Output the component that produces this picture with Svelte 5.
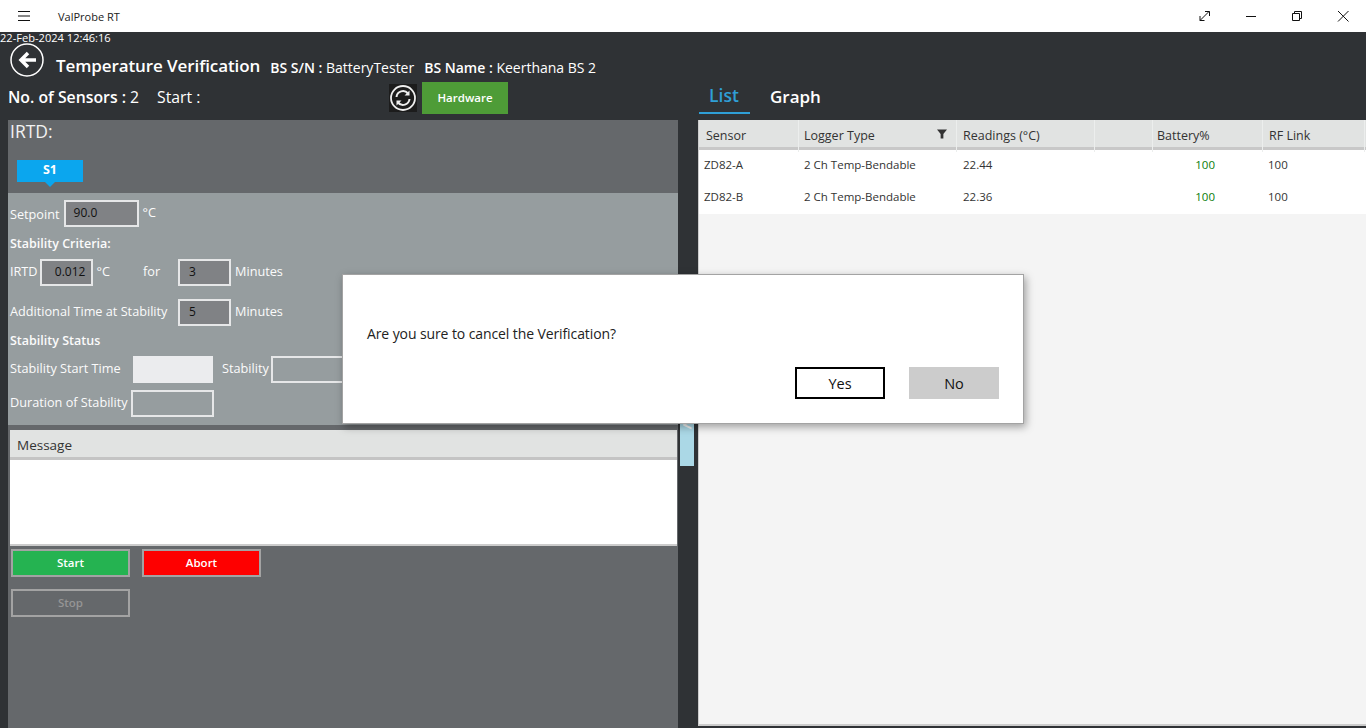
<script>
  const sensors = [
    { name: 'ZD82-A', type: '2 Ch Temp-Bendable', reading: '22.44', battery: '100', rf: '100' },
    { name: 'ZD82-B', type: '2 Ch Temp-Bendable', reading: '22.36', battery: '100', rf: '100' }
  ];
</script>

<div class="window">
  <header class="titlebar">
    <svg class="menu" width="14" height="12" viewBox="0 0 14 12"><path d="M1 1.5h12M1 6h12M1 10.5h12" stroke="#111" stroke-width="1" fill="none"/></svg>
    <span class="app-name">ValProbe RT</span>
    <div class="controls">
      <svg width="46" height="32" viewBox="0 0 46 32"><path d="M18 20.500l9-9M23 11.500h4.500v4.500M18 16v4.500h4.500" stroke="#111" stroke-width="1" fill="none"/></svg>
      <svg width="46" height="32" viewBox="0 0 46 32"><path d="M18 16.500h10" stroke="#111" stroke-width="1" fill="none"/></svg>
      <svg width="46" height="32" viewBox="0 0 46 32"><path d="M18.500 13.500h7v7h-7zM20.500 13.500v-2h7v7h-2" stroke="#111" stroke-width="1" fill="none"/></svg>
      <svg width="46" height="32" viewBox="0 0 46 32"><path d="M18 11l10.500 10.500M28.500 11L18 21.500" stroke="#111" stroke-width="1" fill="none"/></svg>
    </div>
  </header>

  <div class="content">
    <div class="stamp">22-Feb-2024 12:46:16</div>
    <div class="title-row">
      <svg class="back" width="34" height="34" viewBox="0 0 34 34">
        <circle cx="17" cy="17" r="16" fill="none" stroke="#fff" stroke-width="1.500"/>
        <path d="M26 17H12M18 10l-7 7 7 7" fill="none" stroke="#fff" stroke-width="3.500"/>
      </svg>
      <h1>Temperature Verification</h1>
      <span class="meta"><b>BS S/N :</b> BatteryTester</span>
      <span class="meta"><b>BS Name :</b> Keerthana BS 2</span>
    </div>

    <div class="columns">
      <section class="left">
        <div class="sensor-row">
          <span class="count"><b>No. of Sensors :</b> 2</span>
          <span class="start">Start :</span>
          <span class="refresh">
            <svg width="28" height="28" viewBox="0 0 28 28">
              <circle cx="14" cy="14" r="12" fill="none" stroke="#eee" stroke-width="1.800"/>
              <path d="M7.500 13a6.500 6.500 0 0 1 11.500-3.500M20.500 15a6.500 6.500 0 0 1-11.500 3.500" fill="none" stroke="#eee" stroke-width="2"/>
              <path d="M20.500 6.500v5h-5zM7.500 21.500v-5h5z" fill="#eee"/>
            </svg>
          </span>
          <button class="hardware">Hardware</button>
        </div>

        <div class="panel">
          <div class="irtd">
            <div class="irtd-title">IRTD:</div>
            <div class="tab">S1</div>
          </div>
          <div class="form">
            <div class="row setpoint">
              <span>Setpoint</span>
              <span class="box w75">90.0</span>
              <span class="unit">°C</span>
            </div>
            <div class="heading criteria">Stability Criteria:</div>
            <div class="row irtd-row">
              <span class="txt">IRTD</span>
              <span class="box w53 small">0.012</span>
              <span class="unit txt">°C</span>
              <span class="for txt">for</span>
              <span class="box w53 num">3</span>
              <span class="txt">Minutes</span>
            </div>
            <div class="row additional">
              <span class="add-label txt">Additional Time at Stability</span>
              <span class="box w53 num">5</span>
              <span class="txt">Minutes</span>
            </div>
            <div class="heading status">Stability Status</div>
            <div class="row start-row">
              <span class="start-label txt">Stability Start Time</span>
              <span class="filled"></span>
              <span class="stab-label txt">Stability</span>
              <span class="box empty wide"></span>
            </div>
            <div class="row duration">
              <span class="dur-label">Duration of Stability</span>
              <span class="box empty w83"></span>
            </div>
          </div>

          <div class="message">
            <div class="message-head">Message</div>
            <div class="message-body"></div>
          </div>

          <div class="actions">
            <button class="action go">Start</button>
            <button class="action abort">Abort</button>
          </div>
          <div class="actions stop-row">
            <button class="action stop">Stop</button>
          </div>
        </div>
      </section>

      <div class="splitter">
        <div class="handle"><span>&lt;</span></div>
      </div>

      <section class="right">
        <div class="tabs">
          <span class="tab-link active">List</span>
          <span class="tab-link graph">Graph</span>
        </div>
        <div class="grid">
          <div class="grid-head">
            <div class="c1">Sensor</div>
            <div class="c2">Logger Type
              <svg class="filter" width="10" height="10" viewBox="0 0 11 10"><path d="M0 0h11L7 5v5H4V5z" fill="#333"/></svg>
            </div>
            <div class="c3">Readings (°C)</div>
            <div class="c4"></div>
            <div class="c5">Battery%</div>
            <div class="c6">RF Link</div>
          </div>
          {#each sensors as s}
            <div class="grid-row">
              <div class="c1">{s.name}</div>
              <div class="c2">{s.type}</div>
              <div class="c3">{s.reading}</div>
              <div class="c4"></div>
              <div class="c5 batt">{s.battery}</div>
              <div class="c6">{s.rf}</div>
            </div>
          {/each}
        </div>
      </section>
    </div>
  </div>

  <div class="dialog">
    <p>Are you sure to cancel the Verification?</p>
    <div class="dialog-actions">
      <button class="yes">Yes</button>
      <button class="no">No</button>
    </div>
  </div>
</div>

<style>
  :global(body) { margin: 0; background: #2f3235; }
  * { box-sizing: border-box; }
  .window {
    position: relative;
    width: 1366px;
    height: 728px;
    overflow: hidden;
    display: flex;
    flex-direction: column;
    font-family: "Open Sans", "Noto Sans", sans-serif;
    font-size: 12px;
  }
  .titlebar {
    height: 32px;
    background: #fff;
    display: flex;
    align-items: center;
    color: #222;
    flex: none;
  }
  .menu { margin-left: 17px; }
  .app-name { margin-left: 27px; font-size: 11px; }
  .controls { margin-left: auto; display: flex; }
  .controls svg { display: block; }
  .content {
    flex: 1;
    min-height: 0;
    background: #2f3235;
    color: #fff;
    display: flex;
    flex-direction: column;
  }
  .stamp { height: 11px; line-height: 12px; font-size: 11.100px; white-space: nowrap; }
  .title-row {
    height: 39px;
    display: flex;
    align-items: center;
    padding-left: 10px;
    flex: none;
  }
  .back { flex: none; align-self: flex-start; }
  h1 { margin: 5px 10px 0 12px; font-size: 17px; font-weight: 600; letter-spacing: -0.1px; }
  .meta { font-size: 14px; margin: 9px 10px 0 0; }
  .meta b { font-weight: 600; }

  .columns { flex: 1; min-height: 0; display: flex; }
  .left { width: 680px; padding-left: 8px; flex: none; display: flex; flex-direction: column; }
  .sensor-row { height: 38px; display: flex; align-items: flex-start; font-size: 15.800px; flex: none; }
  .count { margin-top: 4px; width: 149px; }
  .count b { font-weight: 600; }
  .start { margin-top: 4px; width: 232px; }
  .refresh {
    margin-right: 5px;
    width: 28px;
    height: 28px;
    background: #1c1c1c;
    flex: none;
    margin-top: 2px;
  }
  .refresh svg { display: block; }
  .hardware {
    width: 86px;
    height: 32px;
    border: 0;
    background: #4e9c37;
    color: #fff;
    font: 600 11.500px "Open Sans", sans-serif;
    padding: 0 0 2px;
  }

  .panel { flex: 1; width: 670px; background: #65686b; display: flex; flex-direction: column; }
  .irtd { height: 73px; padding: 0 2px; flex: none; position: relative; }
  .irtd-title { font-size: 17.500px; color: #f2f2f2; margin-top: -1px; }
  .tab {
    position: absolute;
    left: 9px;
    top: 40px;
    width: 66px;
    height: 22px;
    background: #0ba6ee;
    text-align: center;
    font-weight: 700;
    line-height: 20px;
    font-size: 12.500px;
  }
  .tab::after {
    content: '';
    position: absolute;
    left: 28px;
    top: 22px;
    border: 5px solid transparent;
    border-top-color: #0ba6ee;
    border-bottom: 0;
  }

  .form { height: 232px; background: #969d9f; padding-left: 2px; flex: none; font-size: 12.700px; color: #fbfbfb; }
  .row { display: flex; align-items: center; height: 27px; white-space: nowrap; }
  .txt { padding-bottom: 4px; }
  .heading { font-weight: 600; height: 18px; line-height: 18px; font-size: 12.500px; }
  .setpoint { margin-top: 7px; }
  .setpoint .box { margin-left: 4px; }
  .setpoint .unit { margin-left: 4px; margin-top: -4px; }
  .criteria { margin-top: 8px; }
  .irtd-row { margin-top: 6px; }
  .small { margin-left: 2px; text-align: center; padding-left: 0; }
  .irtd-row .unit { margin-left: 4px; }
  .for { margin-left: 33px; width: 35px; }
  .irtd-row .num, .additional .num { margin-right: 4px; }
  .additional { margin-top: 13px; }
  .add-label { width: 168px; }
  .status { margin-top: 6px; }
  .start-row { margin-top: 6px; }
  .start-label { width: 123px; }
  .filled { width: 80px; height: 27px; background: #ebecee; }
  .stab-label { margin-left: 9px; margin-right: 2px; }
  .duration { margin-top: 7px; }
  .dur-label { width: 121px; padding-bottom: 4px; }
  .box {
    display: inline-block;
    height: 27px;
    border: 2px solid #e6e7e8;
    background: #808285;
    color: #111;
    padding-left: 8px;
    line-height: 22px;
    font-size: 12px;
  }
  .box.empty { background: transparent; }
  .w75 { width: 75px; }
  .w53 { width: 53px; }
  .w83 { width: 83px; }
  .wide { width: 100px; }
  .num { padding-left: 9px; }

  .message { margin-top: 5px; padding-left: 2px; padding-right: 1px; flex: none; }
  .message-head {
    height: 30px;
    background: #e1e3e2;
    color: #333;
    border-bottom: 3px solid #c4c4c4;
    padding-left: 7px;
    line-height: 30px;
    font-size: 13.500px;
  }
  .message-body { height: 86px; background: #fff; border-bottom: 2px solid #ccc; }

  .actions { display: flex; gap: 12px; padding-left: 3px; margin-top: 3px; flex: none; }
  .stop-row { margin-top: 12px; }
  .action {
    width: 119px;
    height: 28px;
    border: 2px solid #a3a3a3;
    font: 600 11.500px "Open Sans", sans-serif;
    color: #fff;
    padding: 0 0 2px;
  }
  .go { background: #25b351; }
  .abort { background: #fe0000; }
  .stop { background: transparent; color: #959595; }

  .splitter { width: 18px; flex: none; position: relative; }
  .handle {
    position: absolute;
    left: 0;
    top: 338px;
    width: 14px;
    height: 46px;
    background: #abd8e6;
    color: #f4f4f4;
    font-size: 17px;
    font-weight: 700;
    text-align: center;
    line-height: 10px;
  }

  .right { flex: 1; min-width: 0; display: flex; flex-direction: column; }
  .tabs { height: 38px; display: flex; flex: none; padding-left: 1px; }
  .tab-link { font-size: 17px; font-weight: 600; height: 32px; line-height: 26px; }
  .tab-link.active { color: #2f9fd6; width: 51px; padding-left: 10px; border-bottom: 2px solid #2f9fd6; font-size: 17.500px; }
  .graph { margin-left: 20px; line-height: 30px; }

  .grid { height: 606px; background: #f4f4f4; border-left: 1px solid #ccc; border-bottom: 2px solid #ccc; }
  .grid-head, .grid-row { display: grid; grid-template-columns: 100px 158px 138px 58px 110px 102px; }
  .grid-head {
    height: 30px;
    background: #e1e3e2;
    border-bottom: 3px solid #c8c8c8;
    color: #333;
    font-size: 12.500px;
    line-height: 32px;
  }
  .grid-head > div { padding-left: 6px; border-right: 1px solid #eceeed; position: relative; }
  .grid-head .c1 { padding-left: 7px; }
  .grid-head .c2 { padding-left: 5px; }
  .grid-head .c5 { padding-left: 4px; }
  .filter { position: absolute; right: 9px; top: 9px; }
  .grid-row { height: 32px; background: #fff; color: #333; font-size: 11.500px; line-height: 30px; }
  .grid-row > div { padding-left: 5px; }
  .grid-row .c3 { padding-left: 6px; }
  .grid-row .batt { color: #0a7d0a; text-align: right; padding-right: 48px; }

  .dialog {
    position: absolute;
    left: 342px;
    top: 274px;
    width: 682px;
    height: 150px;
    background: #fff;
    border: 1px solid #a3a3a3;
    box-shadow: 2px 3px 8px rgba(0, 0, 0, 0.35);
    padding: 0 24px;
    color: #222;
  }
  .dialog p { margin: 49px 0 0; font-size: 14px; line-height: 20px; letter-spacing: -0.1px; }
  .dialog-actions { display: flex; justify-content: flex-end; gap: 24px; margin-top: 23px; }
  .dialog button { width: 90px; height: 32px; font: 500 14.500px "Open Sans", sans-serif; color: #111; padding: 0; }
  .yes { background: #fff; border: 2px solid #000; }
  .no { background: #ccc; border: 0; }
</style>
